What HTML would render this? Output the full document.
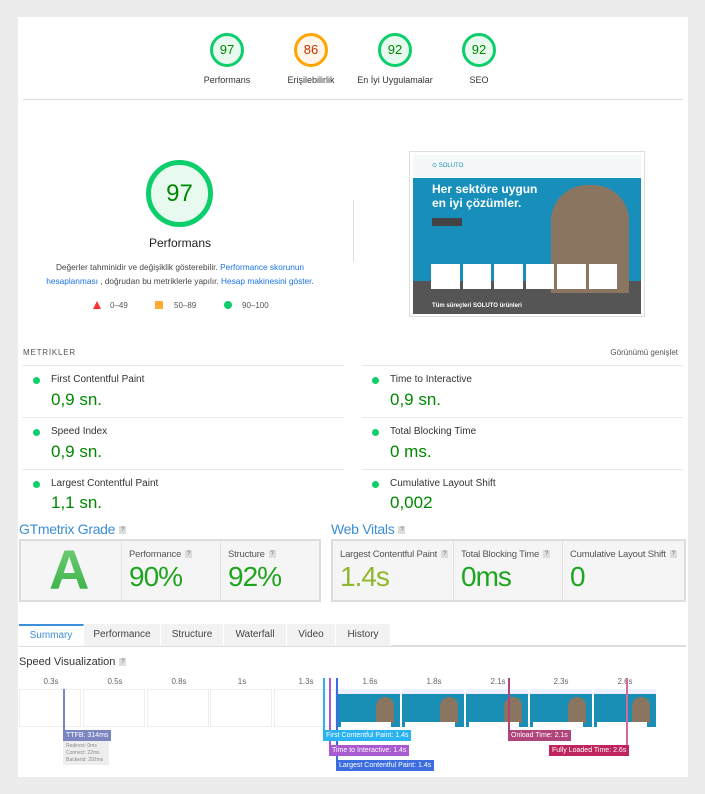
<!DOCTYPE html>
<html><head><meta charset="utf-8"><style>
*{margin:0;padding:0;box-sizing:border-box}
body{width:705px;height:794px;background:#ececec;font-family:"Liberation Sans",Arial,sans-serif;position:relative;overflow:hidden}
.a{position:absolute}
.panel{left:18px;top:17px;width:670px;height:760px;background:#fff}
.g{width:34px;height:34px;border-radius:50%;border:3px solid #0cce6b;background:#e8faf0;color:#008800;font-size:13px;text-align:center;line-height:28px}
.gl{font-size:9px;color:#333;text-align:center;width:120px}
.lk{color:#1a73e8}
.ml{font-size:10px;color:#333}
.mv{font-size:17px;color:#008800}
.dot{width:7px;height:7px;border-radius:50%;background:#0cce6b}
.hr{height:1px;background:#e8e8e8}
.hd{font-size:14px;color:#3b8ed9;letter-spacing:-0.3px}
.q{display:inline-block;width:7px;height:8px;background:#ddd;color:#666;font-size:6px;text-align:center;line-height:8px;vertical-align:middle;margin-left:4px}
.box{border:2px solid #ddd;background:#f5f5f5}
.cell{position:absolute;top:0;height:59px;border-right:1px solid #e2e2e2}
.ct{font-size:9.5px;color:#555;position:absolute;left:7px;top:8px;letter-spacing:-0.2px}
.cv{font-size:28px;color:#1fa51f;position:absolute;left:7px;top:20px;letter-spacing:-1px}
.tab{top:624px;height:22px;background:#f2f2f2;font-size:10px;color:#444;text-align:center;line-height:22px;border-right:1px solid #fff}
.tl{font-size:8px;color:#666;top:677px;width:30px;text-align:center}
.fr{top:689px;width:62px;height:38px;border:1px solid #eee;background:#fff}
.fi{top:689px;width:62px;height:38px;background:#1a8fb5;overflow:hidden}
.mk{font-size:7px;color:#fff;height:11px;line-height:11px;padding:0 3px;white-space:nowrap}
.vl{width:1.5px}
</style></head><body>
<div class="a panel"></div>
<div class="a g" style="left:210px;top:33px">97</div>
<div class="a g" style="left:294px;top:33px;border-color:#ffa400;background:#fff5ea;color:#c33300">86</div>
<div class="a g" style="left:378px;top:33px">92</div>
<div class="a g" style="left:462px;top:33px">92</div>
<div class="a gl" style="left:167px;top:75px">Performans</div>
<div class="a gl" style="left:251px;top:75px">Erişilebilirlik</div>
<div class="a gl" style="left:335px;top:75px">En İyi Uygulamalar</div>
<div class="a gl" style="left:419px;top:75px">SEO</div>
<div class="a hr" style="left:23px;top:99px;width:660px;background:#e0e0e0"></div>
<div class="a g" style="left:146px;top:160px;width:67px;height:67px;border-width:5px;font-size:24px;line-height:57px">97</div>
<div class="a" style="left:120px;top:236px;width:120px;text-align:center;font-size:12px;color:#222">Performans</div>
<div class="a" style="left:40px;top:260px;width:280px;text-align:center;font-size:8.3px;color:#444;line-height:14px">Değerler tahminidir ve değişiklik gösterebilir. <span class="lk">Performance skorunun hesaplanması</span> , doğrudan bu metriklerle yapılır. <span class="lk">Hesap makinesini göster</span>.</div>
<div class="a" style="left:93px;top:301px;width:0;height:0;border-left:4px solid transparent;border-right:4px solid transparent;border-bottom:8px solid #f33"></div>
<div class="a" style="left:110px;top:301px;font-size:8px;color:#555">0–49</div>
<div class="a" style="left:155px;top:301px;width:8px;height:8px;background:#fa3"></div>
<div class="a" style="left:174px;top:301px;font-size:8px;color:#555">50–89</div>
<div class="a dot" style="left:224px;top:301px;width:8px;height:8px"></div>
<div class="a" style="left:242px;top:301px;font-size:8px;color:#555">90–100</div>
<div class="a" style="left:353px;top:200px;width:1px;height:62px;background:#ddd"></div>
<div class="a" style="left:409px;top:151px;width:236px;height:166px;border:1px solid #ddd;background:#fff">
 <div class="a" style="left:3px;top:3px;width:228px;height:22px;background:#f4f8f8"><div class="a" style="left:19px;top:7px;font-size:6px;color:#1a8fb5">⊙ SOLUTO</div></div>
 <div class="a" style="left:3px;top:26px;width:228px;height:113px;background:#178fba"></div>
 <div class="a" style="left:3px;top:129px;width:228px;height:33px;background:#555"></div>
 <div class="a" style="left:22px;top:30px;font-size:12px;font-weight:bold;color:#fff;line-height:14px">Her sektöre uygun<br>en iyi çözümler.</div>
 <div class="a" style="left:22px;top:66px;width:30px;height:8px;background:#444"></div>
 <div class="a" style="left:141px;top:33px;width:78px;height:108px;background:#8a7560;border-radius:36px 36px 0 0"></div>
 <div class="a" style="left:21px;top:112px;width:186px;height:25px;display:flex;gap:3px"><div style="flex:1;background:#fff"></div><div style="flex:1;background:#fff"></div><div style="flex:1;background:#fff"></div><div style="flex:1;background:#fff"></div><div style="flex:1;background:#fff"></div><div style="flex:1;background:#fff"></div></div>
 <div class="a" style="left:22px;top:151px;font-size:6px;color:#fff;font-weight:bold">Tüm süreçleri SOLUTO ürünleri</div>
</div>
<div class="a" style="left:23px;top:348px;font-size:8px;color:#555;letter-spacing:0.8px">METRİKLER</div>
<div class="a" style="left:578px;top:348px;width:100px;text-align:right;font-size:8px;color:#555">Görünümü genişlet</div>
<div class="a hr" style="left:22px;top:365px;width:322px"></div>
<div class="a hr" style="left:362px;top:365px;width:321px"></div>
<div class="a hr" style="left:22px;top:417px;width:322px"></div>
<div class="a hr" style="left:362px;top:417px;width:321px"></div>
<div class="a hr" style="left:22px;top:469px;width:322px"></div>
<div class="a hr" style="left:362px;top:469px;width:321px"></div>
<div class="a dot" style="left:33px;top:377px"></div><div class="a ml" style="left:51px;top:374px">First Contentful Paint</div><div class="a mv" style="left:51px;top:390px">0,9 sn.</div>
<div class="a dot" style="left:33px;top:429px"></div><div class="a ml" style="left:51px;top:426px">Speed Index</div><div class="a mv" style="left:51px;top:442px">0,9 sn.</div>
<div class="a dot" style="left:33px;top:481px"></div><div class="a ml" style="left:51px;top:478px">Largest Contentful Paint</div><div class="a mv" style="left:51px;top:493px">1,1 sn.</div>
<div class="a dot" style="left:372px;top:377px"></div><div class="a ml" style="left:390px;top:374px">Time to Interactive</div><div class="a mv" style="left:390px;top:390px">0,9 sn.</div>
<div class="a dot" style="left:372px;top:429px"></div><div class="a ml" style="left:390px;top:426px">Total Blocking Time</div><div class="a mv" style="left:390px;top:442px">0 ms.</div>
<div class="a dot" style="left:372px;top:481px"></div><div class="a ml" style="left:390px;top:478px">Cumulative Layout Shift</div><div class="a mv" style="left:390px;top:493px">0,002</div>
<div class="a hd" style="left:19px;top:521px">GTmetrix Grade<span class="q">?</span></div>
<div class="a box" style="left:19px;top:539px;width:302px;height:63px">
 <div class="cell" style="left:0;width:101px"><div class="a" style="left:28px;top:-4px;font-size:56px;font-weight:bold;line-height:66px;background:linear-gradient(#7ad17f,#2fae3d);-webkit-background-clip:text;background-clip:text;color:transparent">A</div></div>
 <div class="cell" style="left:101px;width:99px"><div class="ct">Performance<span class="q">?</span></div><div class="cv">90%</div></div>
 <div class="cell" style="left:200px;width:98px;border:0"><div class="ct">Structure<span class="q">?</span></div><div class="cv">92%</div></div>
</div>
<div class="a hd" style="left:331px;top:521px">Web Vitals<span class="q">?</span></div>
<div class="a box" style="left:331px;top:539px;width:355px;height:63px">
 <div class="cell" style="left:0;width:121px"><div class="ct">Largest Contentful Paint<span class="q">?</span></div><div class="cv" style="color:#8fb82c">1.4s</div></div>
 <div class="cell" style="left:121px;width:109px"><div class="ct">Total Blocking Time<span class="q">?</span></div><div class="cv">0ms</div></div>
 <div class="cell" style="left:230px;width:121px;border:0"><div class="ct">Cumulative Layout Shift<span class="q">?</span></div><div class="cv">0</div></div>
</div>
<div class="a" style="left:19px;top:645px;width:667px;height:2px;background:#ddd"></div>
<div class="a tab" style="left:19px;width:65px;background:#fff;color:#3b8ed9;border-top:2px solid #3b8ed9;line-height:20px">Summary</div>
<div class="a tab" style="left:84px;width:77px">Performance</div>
<div class="a tab" style="left:161px;width:63px">Structure</div>
<div class="a tab" style="left:224px;width:63px">Waterfall</div>
<div class="a tab" style="left:287px;width:49px">Video</div>
<div class="a tab" style="left:336px;width:55px">History</div>
<div class="a" style="left:19px;top:656px;font-size:11px;color:#333">Speed Visualization<span class="q">?</span></div>
<div class="a tl" style="left:36px">0.3s</div><div class="a tl" style="left:100px">0.5s</div><div class="a tl" style="left:164px">0.8s</div><div class="a tl" style="left:227px">1s</div><div class="a tl" style="left:291px">1.3s</div><div class="a tl" style="left:355px">1.6s</div><div class="a tl" style="left:419px">1.8s</div><div class="a tl" style="left:483px">2.1s</div><div class="a tl" style="left:546px">2.3s</div><div class="a tl" style="left:610px">2.6s</div>
<div class="a fr" style="left:19px"></div><div class="a fr" style="left:83px"></div><div class="a fr" style="left:147px"></div><div class="a fr" style="left:210px"></div><div class="a fr" style="left:274px"></div>
<div class="a fi" style="left:338px"><div class="a" style="left:0;top:0;width:62px;height:5px;background:#eef"></div><div class="a" style="left:38px;top:8px;width:18px;height:26px;background:#8a7560;border-radius:9px 9px 0 0"></div><div class="a" style="left:3px;top:33px;width:50px;height:5px;background:#fff"></div></div>
<div class="a fi" style="left:402px"><div class="a" style="left:0;top:0;width:62px;height:5px;background:#eef"></div><div class="a" style="left:38px;top:8px;width:18px;height:26px;background:#8a7560;border-radius:9px 9px 0 0"></div><div class="a" style="left:3px;top:33px;width:50px;height:5px;background:#fff"></div></div>
<div class="a fi" style="left:466px"><div class="a" style="left:0;top:0;width:62px;height:5px;background:#eef"></div><div class="a" style="left:38px;top:8px;width:18px;height:26px;background:#8a7560;border-radius:9px 9px 0 0"></div><div class="a" style="left:3px;top:33px;width:50px;height:5px;background:#fff"></div></div>
<div class="a fi" style="left:530px"><div class="a" style="left:0;top:0;width:62px;height:5px;background:#eef"></div><div class="a" style="left:38px;top:8px;width:18px;height:26px;background:#8a7560;border-radius:9px 9px 0 0"></div><div class="a" style="left:3px;top:33px;width:50px;height:5px;background:#fff"></div></div>
<div class="a fi" style="left:594px"><div class="a" style="left:0;top:0;width:62px;height:5px;background:#eef"></div><div class="a" style="left:38px;top:8px;width:18px;height:26px;background:#8a7560;border-radius:9px 9px 0 0"></div><div class="a" style="left:3px;top:33px;width:50px;height:5px;background:#fff"></div></div>
<div class="a vl" style="left:63px;top:689px;height:42px;background:#7b86c0"></div>
<div class="a vl" style="left:323px;top:678px;height:52px;background:#2ab3f0"></div>
<div class="a vl" style="left:329px;top:678px;height:67px;background:#a95ad0"></div>
<div class="a vl" style="left:336px;top:678px;height:82px;background:#3c6de0"></div>
<div class="a vl" style="left:508px;top:678px;height:52px;background:#b0457c"></div>
<div class="a vl" style="left:626px;top:678px;height:67px;background:#d06a9a"></div>
<div class="a mk" style="left:63px;top:730px;background:#7b86c0">TTFB: 314ms</div>
<div class="a" style="left:63px;top:741px;width:46px;height:24px;background:#eee;font-size:5px;color:#888;padding:2px 3px;line-height:7px;white-space:nowrap">Redirect: 0ms<br>Connect: 22ms<br>Backend: 292ms</div>
<div class="a mk" style="left:323px;top:730px;background:#2ab3f0">First Contentful Paint: 1.4s</div>
<div class="a mk" style="left:329px;top:745px;background:#a95ad0">Time to Interactive: 1.4s</div>
<div class="a mk" style="left:336px;top:760px;background:#3c6de0">Largest Contentful Paint: 1.4s</div>
<div class="a mk" style="left:508px;top:730px;background:#b0457c">Onload Time: 2.1s</div>
<div class="a mk" style="left:549px;top:745px;background:#c0245e">Fully Loaded Time: 2.6s</div>
</body></html>
